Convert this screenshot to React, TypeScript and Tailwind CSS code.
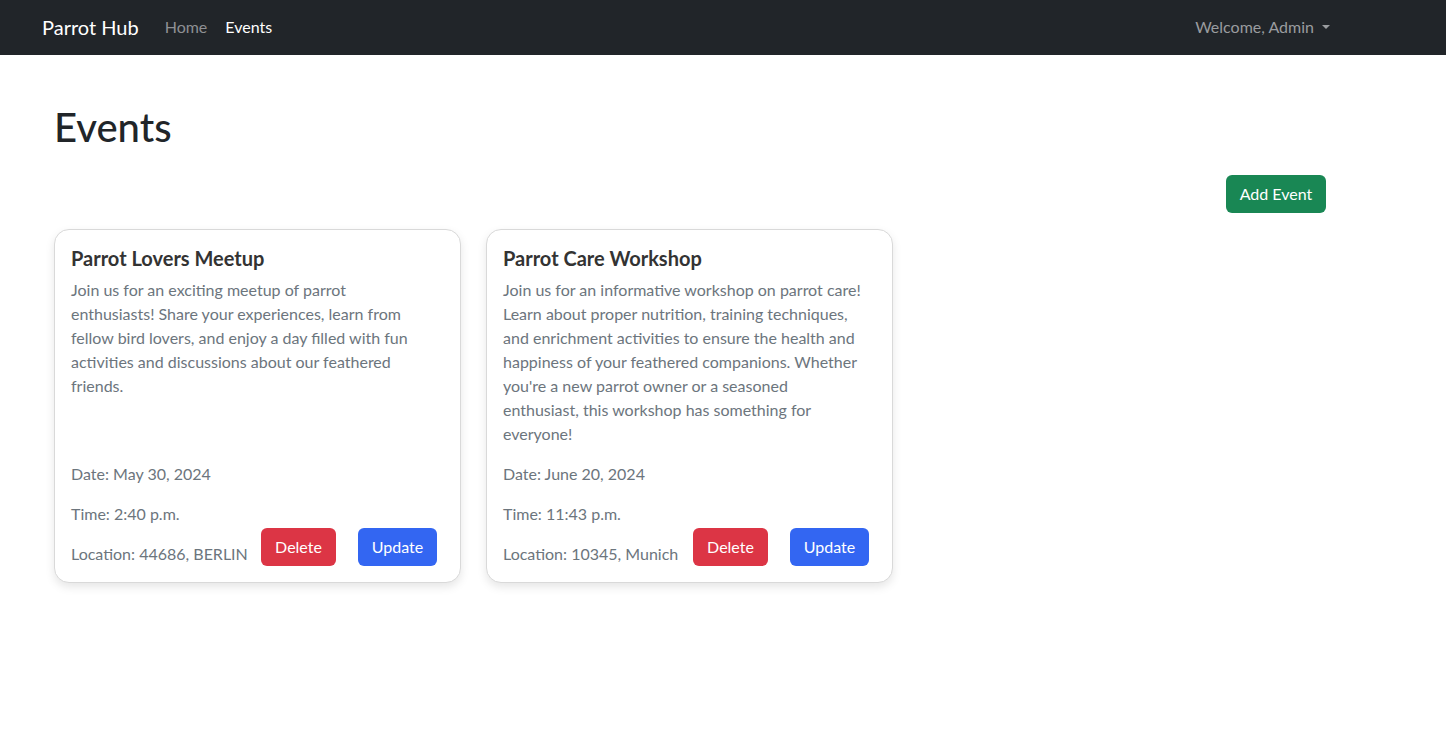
import React from "react";

type EventItem = {
  title: string;
  lines: string[];
  date: string;
  time: string;
  location: string;
};

const events: EventItem[] = [
  {
    title: "Parrot Lovers Meetup",
    lines: [
      "Join us for an exciting meetup of parrot",
      "enthusiasts! Share your experiences, learn from",
      "fellow bird lovers, and enjoy a day filled with fun",
      "activities and discussions about our feathered",
      "friends.",
    ],
    date: "May 30, 2024",
    time: "2:40 p.m.",
    location: "44686, BERLIN",
  },
  {
    title: "Parrot Care Workshop",
    lines: [
      "Join us for an informative workshop on parrot care!",
      "Learn about proper nutrition, training techniques,",
      "and enrichment activities to ensure the health and",
      "happiness of your feathered companions. Whether",
      "you're a new parrot owner or a seasoned",
      "enthusiast, this workshop has something for",
      "everyone!",
    ],
    date: "June 20, 2024",
    time: "11:43 p.m.",
    location: "10345, Munich",
  },
];

function EventCard({ ev }: { ev: EventItem }) {
  return (
    <div className="w-[407px] flex flex-col rounded-[15px] border border-[#d9d9d9] bg-white p-4 shadow-[0_4px_10px_rgba(0,0,0,0.1)]">
      <h5 className="text-[20px] leading-[24px] font-bold text-[#333333] mb-2">{ev.title}</h5>
      <p className="text-[16px] leading-[24px] text-[#6c757d] mb-4">
        {ev.lines.map((l, i) => (
          <span key={i} className="block whitespace-nowrap">
            {l}
          </span>
        ))}
      </p>
      <div className="mt-auto text-[16px] leading-[24px] text-[#6c757d]">
        <p className="mb-4">Date: {ev.date}</p>
        <p className="mb-[2px]">Time: {ev.time}</p>
        <div className="flex items-end">
          <p className="whitespace-nowrap w-[176px]">Location: {ev.location}</p>
          <button className="ml-[14px] h-[38px] w-[75px] rounded-[6px] bg-[#dc3545] text-white">
            Delete
          </button>
          <button className="ml-[22px] h-[38px] w-[79px] rounded-[6px] bg-[#3366f2] text-white">
            Update
          </button>
        </div>
      </div>
    </div>
  );
}

export default function App() {
  return (
    <div className="min-h-screen bg-white font-['Lato','Noto_Sans',sans-serif]">
      <nav className="h-[55px] bg-[#212529] flex items-center pl-[42px] pr-[116px] pb-[1px]">
        <span className="text-[20px] text-white">Parrot Hub</span>
        <span className="ml-[26px] text-[16px] text-[#8e9093]">Home</span>
        <span className="ml-[18px] text-[16px] text-white">Events</span>
        <span className="ml-auto flex items-center text-[16px] text-[#9a9c9f]">
          Welcome, Admin
          <span className="ml-[8px] inline-block border-x-[4px] border-t-[4px] border-x-transparent border-t-[#9a9c9f]"></span>
        </span>
      </nav>
      <main className="ml-[54px] w-[1272px] pt-12">
        <h1 className="text-[40px] leading-[48px] font-medium text-[#212529] mb-6">Events</h1>
        <div className="flex justify-end">
          <button className="h-[38px] w-[100px] rounded-[6px] bg-[#198754] text-[16px] text-white">
            Add Event
          </button>
        </div>
        <div className="mt-4 flex gap-[25px] items-stretch">
          {events.map((ev) => (
            <EventCard key={ev.title} ev={ev} />
          ))}
        </div>
      </main>
    </div>
  );
}
